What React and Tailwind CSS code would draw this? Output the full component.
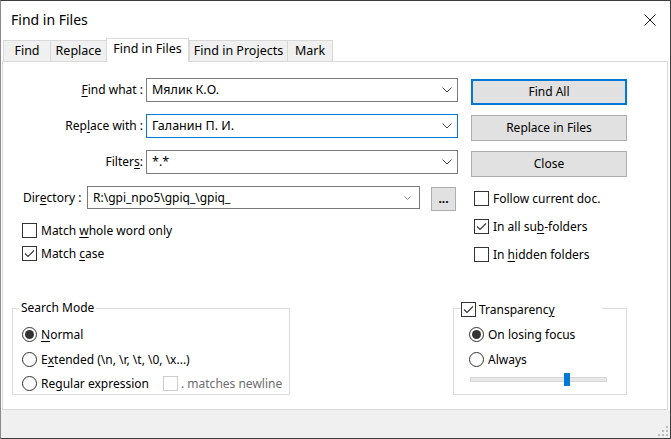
import React from 'react'

function Acc({ children }) {
  return <span className="underline decoration-1 underline-offset-[2px]">{children}</span>
}

function Check({ checked, disabled }) {
  return (
    <span
      className={`flex size-[15px] shrink-0 items-center justify-center border bg-white ${
        disabled ? 'border-[#cccccc]' : 'border-[#333333]'
      }`}
    >
      {checked ? (
        <svg width="13" height="13" viewBox="0 0 13 13">
          <path d="M2 6.5 L5 9.5 L11 3.5" fill="none" stroke="#333333" strokeWidth="1.1" />
        </svg>
      ) : null}
    </span>
  )
}

function Radio({ checked }) {
  return (
    <span className="flex size-[15px] shrink-0 items-center justify-center rounded-full border border-[#333333] bg-white">
      {checked ? <span className="size-[9px] rounded-full bg-[#333333]" /> : null}
    </span>
  )
}

function Chevron({ light }) {
  return light ? (
    <svg width="7" height="4" viewBox="0 0 7 4">
      <path d="M0.5 0.5 L3.5 3.5 L6.5 0.5" fill="none" stroke="#888888" strokeWidth="1" />
    </svg>
  ) : (
    <svg width="10" height="6" viewBox="0 0 10 6">
      <path d="M0.5 0.5 L5 5 L9.5 0.5" fill="none" stroke="#444444" strokeWidth="1" />
    </svg>
  )
}

function Combo({ value, focused }) {
  return (
    <div
      className={`ml-[3px] flex h-[24px] w-[312px] items-center justify-between border pl-[5px] pr-[5px] ${
        focused ? 'border-[#0078d7]' : 'border-[#7a7a7a]'
      }`}
    >
      <span className="text-[12.5px]">{value}</span>
      <Chevron />
    </div>
  )
}

function Button({ children, primary }) {
  return (
    <button
      type="button"
      className={`ml-[13px] mt-[1px] flex h-[26px] w-[156px] items-center justify-center bg-[#e1e1e1] ${
        primary ? 'border-2 border-[#0078d7]' : 'border border-[#adadad]'
      }`}
    >
      {children}
    </button>
  )
}

function CheckRow({ checked, children }) {
  return (
    <div className="flex h-[15px] items-center gap-[4px]">
      <Check checked={checked} />
      <span>{children}</span>
    </div>
  )
}

function RadioRow({ checked, children }) {
  return (
    <div className="flex h-[15px] items-center gap-[4px]">
      <Radio checked={checked} />
      <span className="whitespace-nowrap">{children}</span>
    </div>
  )
}

const tabs = [
  { label: 'Find', w: 'w-[47px]' },
  { label: 'Replace', w: 'w-[56px]' },
  { label: 'Find in Files', w: 'w-[83px]', active: true },
  { label: 'Find in Projects', w: 'w-[98px]' },
  { label: 'Mark', w: 'w-[46px]', last: true },
]

export default function App() {
  return (
    <div className="flex h-[439px] w-[671px] flex-col overflow-hidden border border-[#3c3c3c] border-l-[#8a8a8a] bg-white font-['Noto_Sans',sans-serif] text-[12px] leading-none text-black">
      {/* title bar */}
      <div className="flex h-[37px] shrink-0 items-center justify-between pl-[10px] pr-[14px]">
        <span className="text-[14px]">Find in Files</span>
        <svg width="12" height="12" viewBox="0 0 12 12">
          <path d="M0.5 0.5 L11.5 11.5 M11.5 0.5 L0.5 11.5" stroke="#111111" strokeWidth="1" />
        </svg>
      </div>

      {/* tabs */}
      <div className="flex h-[23px] shrink-0 items-end pl-[2px] text-[12.5px]">
        {tabs.map((tab) =>
          tab.active ? (
            <div
              key={tab.label}
              className={`relative z-10 -mb-px flex h-[24px] ${tab.w} items-start justify-center border border-b-0 border-[#d9d9d9] bg-white pt-[4px]`}
            >
              {tab.label}
            </div>
          ) : (
            <div
              key={tab.label}
              className={`flex h-[21px] ${tab.w} items-center justify-center border-l border-t border-[#d9d9d9] bg-[#f0f0f0] ${
                tab.last ? 'border-r' : ''
              }`}
            >
              {tab.label}
            </div>
          ),
        )}
      </div>

      {/* tab panel */}
      <div className="ml-px flex h-[349px] w-[666px] shrink-0 flex-col border border-[#d9d9d9] bg-white pt-[16px]">
        <div className="flex h-[36px] items-start">
          <label className="flex h-[24px] w-[140px] items-center justify-end">
            <Acc>F</Acc>ind what :
          </label>
          <Combo value="Мялик К.О." />
          <Button primary>Find All</Button>
        </div>
        <div className="flex h-[36px] items-start">
          <label className="flex h-[24px] w-[140px] items-center justify-end">
            Rep<Acc>l</Acc>ace with :
          </label>
          <Combo value="Галанин П. И." focused />
          <Button>Replace in Files</Button>
        </div>
        <div className="flex h-[36px] items-start">
          <label className="flex h-[24px] w-[140px] items-center justify-end">
            Filter<Acc>s</Acc> :
          </label>
          <Combo value="*.*" />
          <Button>Close</Button>
        </div>

        <div className="flex">
          <div className="w-[471px]">
            <div className="flex h-[23px] items-start">
              <label className="flex h-[23px] w-[84px] items-center pl-[20px]">
                Dir<Acc>e</Acc>ctory :
              </label>
              <div className="flex h-[23px] w-[333px] items-center justify-between border border-[#7a7a7a] pl-[5px] pr-[8px]">
                <span>R:\gpi_npo5\gpiq_\gpiq_</span>
                <Chevron light />
              </div>
              <button
                type="button"
                className="ml-[11px] mt-px flex h-[24px] w-[25px] items-end justify-center border border-[#adadad] bg-[#e1e1e1] pb-[5px] font-bold"
              >
                ...
              </button>
            </div>
            <div className="mt-[14px] flex flex-col gap-[8px] pl-[19px]">
              <CheckRow>
                Match <Acc>w</Acc>hole word only
              </CheckRow>
              <CheckRow checked>
                Match <Acc>c</Acc>ase
              </CheckRow>
            </div>
          </div>
          <div className="flex flex-col gap-[13px] pt-[5px]">
            <CheckRow>Follow current doc.</CheckRow>
            <CheckRow checked>
              In all su<Acc>b</Acc>-folders
            </CheckRow>
            <CheckRow>
              In <Acc>h</Acc>idden folders
            </CheckRow>
          </div>
        </div>

        <div className="mt-[38px] flex items-start">
          <fieldset className="ml-[9px] h-[95px] w-[278px] border border-[#dcdcdc] pl-[9px]">
            <legend className="ml-[-3px] h-[16px] px-[2px] leading-[16px]">Search Mode</legend>
            <div className="mt-[11px] flex flex-col">
              <RadioRow checked>
                <Acc>N</Acc>ormal
              </RadioRow>
              <div className="mt-[10px]">
                <RadioRow>
                  E<Acc>x</Acc>tended (\n, \r, \t, \0, \x...)
                </RadioRow>
              </div>
              <div className="mt-[9px] flex h-[15px] items-center">
                <Radio />
                <span className="ml-[4px] w-[122px] whitespace-nowrap">
                  Re<Acc>g</Acc>ular expression
                </span>
                <Check disabled />
                <span className="ml-[3px] w-[101px] overflow-hidden whitespace-nowrap text-[#6d6d6d]">
                  <Acc>.</Acc> matches newline
                </span>
              </div>
            </div>
          </fieldset>

          <fieldset className="ml-[163px] h-[95px] w-[174px] border border-[#dcdcdc] pl-[15px]">
            <legend className="ml-[-8px] flex h-[16px] w-[141px] items-start gap-[3px] pt-[2px]">
              <Check checked />
              <span className="leading-[15px]">
                Transparenc<Acc>y</Acc>
              </span>
            </legend>
            <div className="mt-[11px] flex flex-col">
              <RadioRow checked>On losing focus</RadioRow>
              <div className="mt-[10px]">
                <RadioRow>Always</RadioRow>
              </div>
              <div className="relative ml-px mt-[6px] flex h-[13px] w-[137px] items-center">
                <div className="h-[5px] w-full border border-[#d6d6d6] bg-[#e7e7e7]" />
                <div className="absolute left-[94px] top-0 h-[13px] w-[6px] bg-[#0078d7]" />
              </div>
            </div>
          </fieldset>
        </div>
      </div>

      {/* status strip */}
      <div className="flex flex-1 items-end justify-end bg-[#f0f0f0] pb-[1px] pr-[1px]">
        <svg width="11" height="11" viewBox="0 0 11 11" fill="#bcbcbc">
          <rect x="8" y="0" width="2" height="2" />
          <rect x="4" y="4" width="2" height="2" />
          <rect x="8" y="4" width="2" height="2" />
          <rect x="0" y="8" width="2" height="2" />
          <rect x="4" y="8" width="2" height="2" />
          <rect x="8" y="8" width="2" height="2" />
        </svg>
      </div>
    </div>
  )
}
